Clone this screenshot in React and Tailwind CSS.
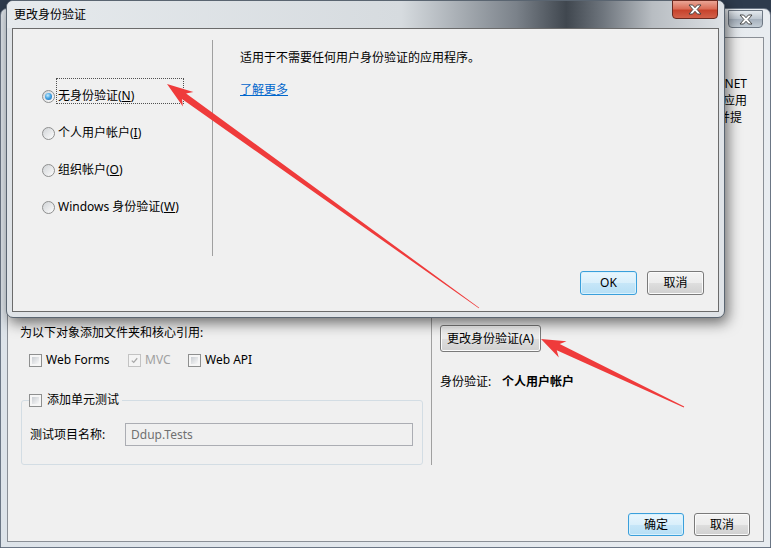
const fontCls = "font-['Noto_Sans','Noto_Sans_CJK_SC',sans-serif]";

// arrow shape in the style of a screenshot markup tool: thin tail, widening shaft, swept head
function arrowPoints(tx, ty, px, py, head, wing, neck) {
  const dx = px - tx;
  const dy = py - ty;
  const len = Math.hypot(dx, dy);
  const ux = dx / len;
  const uy = dy / len;
  const nx = -uy;
  const ny = ux;
  const at = (along, side) => [px - ux * along + nx * side, py - uy * along + ny * side];
  const pts = [
    [tx + nx * 0.4, ty + ny * 0.4],
    at(head - 5, neck),
    at(head, wing),
    [px, py],
    at(head, -wing),
    at(head - 5, -neck),
    [tx - nx * 0.4, ty - ny * 0.4],
  ];
  return pts.map(([x, y]) => `${x.toFixed(1)},${y.toFixed(1)}`).join(' ');
}

const CloseGlyph = () => (
  <svg width="14" height="11" viewBox="0 0 14 11">
    <path
      d="M1 1h3.6L7 3.7 9.4 1H13L9.1 5.5 13 10H9.4L7 7.3 4.6 10H1l3.9-4.5Z"
      fill="#fff"
      stroke="#3b3b3b"
      strokeWidth="0.9"
      strokeLinejoin="round"
    />
  </svg>
);

const Checkbox = ({ checked = false, disabled = false }) => (
  <span
    className={`flex h-[13px] w-[13px] shrink-0 items-center justify-center border p-[2px] ${
      disabled ? 'border-[#c3c3c3] bg-[#f4f4f4]' : 'border-[#8e8f8f] bg-[#f6f6f6]'
    }`}
  >
    {checked ? (
      <svg width="9" height="9" viewBox="0 0 9 9">
        <path d="M1 4.6 3.5 7 8 1.6" fill="none" stroke="#a8a8a8" strokeWidth="1.6" />
      </svg>
    ) : (
      <span className="h-full w-full bg-[linear-gradient(135deg,#c9cdd2,#f8f8f8)]" />
    )}
  </span>
);

const Radio = ({ checked = false }) => (
  <span className="flex h-[13px] w-[13px] shrink-0 items-center justify-center rounded-full border border-[#8e8f8f] bg-[linear-gradient(135deg,#d0d3d6,#fdfdfd)]">
    {checked && (
      <span className="h-[7px] w-[7px] rounded-full bg-[radial-gradient(circle_at_40%_35%,#c8ecfc_0%,#48a6e4_45%,#1760ad_100%)]" />
    )}
  </span>
);

const Button = ({ children, primary = false, className = '' }) => (
  <button
    className={`flex items-center justify-center rounded-[3px] border text-[12px] text-black ${
      primary
        ? 'border-[#3a9fdb] bg-[linear-gradient(#e9f6fd_0%,#d9effb_50%,#c6e6f8_51%,#b7dff5_100%)] shadow-[inset_0_0_0_1px_#d8f1fd]'
        : 'border-[#7a7a7a] bg-[linear-gradient(#f3f3f3_0%,#ececec_50%,#dedede_51%,#d0d0d0_100%)] shadow-[inset_0_0_0_1px_#fbfbfb]'
    } ${className}`}
  >
    {children}
  </button>
);

const RadioRow = ({ checked, focused, children }) => (
  <div className="flex h-[16px] items-center gap-[3px]">
    <Radio checked={checked} />
    <span className="relative whitespace-nowrap">
      {children}
      {focused && (
        <span className="absolute -left-[2px] -top-[10px] h-[26px] w-[128px] border border-dotted border-[#505050]" />
      )}
    </span>
  </div>
);

export default function App() {
  return (
    <div className={`relative h-[548px] w-[771px] overflow-hidden bg-[#2e3b4d] text-[12px] leading-[16px] text-black ${fontCls}`}>
      {/* background window: new ASP.NET project */}
      <div className="mt-[8px] flex h-[540px] flex-col rounded-t-[7px] border border-[#6b7685] bg-[linear-gradient(90deg,#dde3e9,#e8ecf0)]">
        <div className="flex h-[28px] items-start justify-end pr-[7px]">
          <div className="mt-[1px] flex h-[18px] w-[35px] items-center justify-center rounded-b-[4px] border border-[#6e7884] bg-[linear-gradient(#e4e9ee,#bcc5cf_50%,#a5b0bc_51%,#c3ccd5)]">
            <CloseGlyph />
          </div>
        </div>
        <div className="flex flex-1 px-[6px] pb-[5px]">
          <div className="flex flex-1 flex-col border border-[#8a8f96] bg-[#f0f0f0]">
            <div className="flex h-[427px]">
              <div className="flex w-[423px] flex-col justify-end">
                <p className="pl-[12px]">为以下对象添加文件夹和核心引用:</p>
                <div className="mt-[11px] flex h-[16px] items-center pl-[21px]">
                  <label className="flex w-[99px] items-center gap-[4px]">
                    <Checkbox />
                    <span>Web Forms</span>
                  </label>
                  <label className="flex w-[60px] items-center gap-[4px] text-[#a0a0a0]">
                    <Checkbox checked disabled />
                    <span>MVC</span>
                  </label>
                  <label className="flex items-center gap-[4px]">
                    <Checkbox />
                    <span>Web API</span>
                  </label>
                </div>
                <fieldset className="ml-[13px] mt-[24px] w-[402px] rounded-[3px] border border-[#d3dde4] px-[8px] pb-[18px]">
                  <legend className="-ml-[1px] pr-[3px]">
                    <span className="flex h-[16px] items-center gap-[5px]">
                      <Checkbox />
                      <span>添加单元测试</span>
                    </span>
                  </legend>
                  <div className="mt-[15px] flex h-[23px] items-center">
                    <span className="w-[95px]">测试项目名称:</span>
                    <div className="flex h-[23px] w-[288px] items-center border border-[#abadb3] bg-[#f0f0f0] pl-[5px] text-[#707070]">
                      Ddup.Tests
                    </div>
                  </div>
                </fieldset>
              </div>
              <div className="w-px bg-[#a0a0a0]" />
              <div className="flex flex-1 flex-col pl-[8px]">
                <div className="mt-[37px] whitespace-nowrap pr-[16px] text-right leading-[17px]">
                  <div>用于创建 ASP.NET MVC 应用程序的模板。ASP.NET</div>
                  <div>MVC 使您能够采用模型-视图-控制器结构生成应用</div>
                  <div className="pr-[5px]">程序，并为测试驱动开发和敏捷方法并提</div>
                </div>
                <Button className="mt-[199px] h-[27px] w-[101px]">更改身份验证(A)</Button>
                <div className="mt-[22px] flex h-[16px] items-center">
                  <span className="w-[62px]">身份验证:</span>
                  <span className="font-bold">个人用户帐户</span>
                </div>
              </div>
            </div>
            <div className="flex flex-1 items-end justify-end gap-[10px] pb-[5px] pr-[13px]">
              <Button primary className="h-[23px] w-[56px]">确定</Button>
              <Button className="h-[23px] w-[56px]">取消</Button>
            </div>
          </div>
        </div>
      </div>

      {/* foreground dialog: change authentication */}
      <div className="absolute left-[6px] top-0 flex h-[318px] w-[719px] flex-col rounded-[7px] border border-[#5a6571] bg-[#dfe3e7] shadow-[3px_5px_14px_rgba(0,0,0,0.55)]">
        <div className="flex h-[27px] items-start justify-between rounded-t-[6px] bg-[linear-gradient(90deg,#e6eaed_0%,#d6dbdf_55%,#7b828a_71%,#40474f_78%,#6d747c_83%,#b8bdc2_90%,#dde1e5_100%)] pl-[7px] pr-[6px]">
          <span className="mt-[6px]">更改身份验证</span>
          <div className="-mt-px flex h-[19px] w-[46px] items-center justify-center rounded-b-[4px] border border-[#6a2a20] bg-[linear-gradient(#eaa595_0%,#da6e58_45%,#c7432c_55%,#d2614a_100%)]">
            <CloseGlyph />
          </div>
        </div>
        <div className="flex flex-1 px-[5px] pb-[5px]">
          <div className="flex flex-1 flex-col border border-[#6b6b6b] bg-[#f0f0f0]">
            <div className="mt-[11px] flex h-[216px]">
              <div className="flex w-[199px] flex-col gap-[21px] pl-[29px] pt-[48px]">
                <RadioRow checked focused>
                  无身份验证(<u>N</u>)
                </RadioRow>
                <RadioRow>
                  个人用户帐户(<u>I</u>)
                </RadioRow>
                <RadioRow>
                  组织帐户(<u>O</u>)
                </RadioRow>
                <RadioRow>
                  Windows 身份验证(<u>W</u>)
                </RadioRow>
              </div>
              <div className="w-px bg-[#a0a0a0]" />
              <div className="flex flex-col items-start pl-[27px] pt-[10px]">
                <p>适用于不需要任何用户身份验证的应用程序。</p>
                <a className="mt-[16px] text-[#0066cc] underline">了解更多</a>
              </div>
            </div>
            <div className="flex flex-1 items-end justify-end gap-[10px] pb-[16px] pr-[14px]">
              <Button primary className="h-[24px] w-[57px]">OK</Button>
              <Button className="h-[24px] w-[57px]">取消</Button>
            </div>
          </div>
        </div>
      </div>

      {/* red markup arrows */}
      <svg className="pointer-events-none absolute inset-0" width="771" height="548" viewBox="0 0 771 548">
        <polygon points={arrowPoints(479, 308, 167, 84, 26, 9, 3.5)} fill="#ef3b3b" />
        <polygon points={arrowPoints(684, 407, 541, 339, 24, 9, 3.5)} fill="#ef3b3b" />
      </svg>
    </div>
  );
}
